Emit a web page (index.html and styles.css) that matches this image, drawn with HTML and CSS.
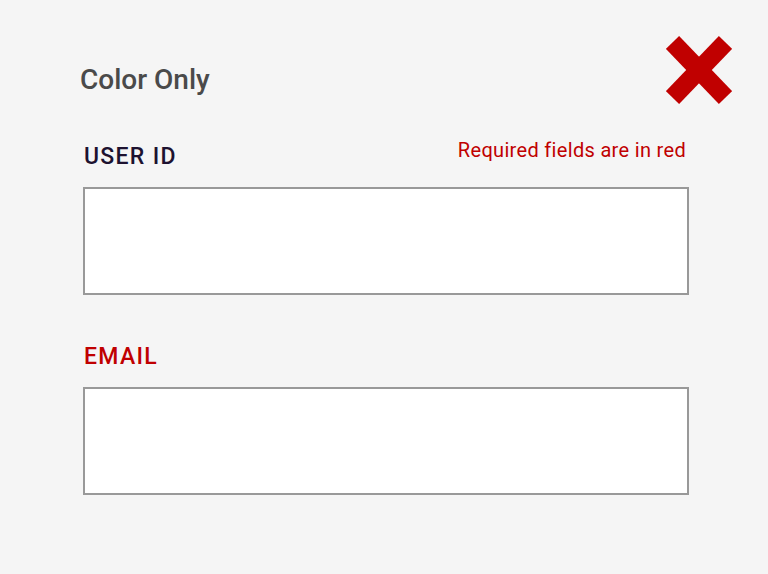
FILE: index.html
```html
<!DOCTYPE html>
<html lang="en">
<head>
<meta charset="utf-8">
<link rel="stylesheet" href="styles.css">
<title>Color Only</title>
</head>
<body>
<main class="page">
  <header class="header">
    <h1 class="title">Color Only</h1>
    <svg class="mark" width="66" height="68" viewBox="0 0 66 68" aria-hidden="true">
      <line x1="6.5" y1="6.5" x2="59.5" y2="61.5" stroke="#c00000" stroke-width="18.4"/>
      <line x1="59.5" y1="6.5" x2="6.5" y2="61.5" stroke="#c00000" stroke-width="18.4"/>
    </svg>
  </header>
  <form class="form">
    <div class="field">
      <div class="field-head">
        <label class="label" for="uid">USER ID</label>
        <span class="hint">Required fields are in red</span>
      </div>
      <input class="input" id="uid" type="text">
    </div>
    <div class="field">
      <div class="field-head">
        <label class="label label-req" for="email">EMAIL</label>
      </div>
      <input class="input" id="email" type="text">
    </div>
  </form>
</main>
</body>
</html>
```
FILE: styles.css
```css
html, body {
  margin: 0;
  padding: 0;
  background: #f5f5f5;
}
body {
  font-family: Roboto, "Liberation Sans", sans-serif;
  width: 768px;
  height: 574px;
  overflow: hidden;
}
.page {
  padding: 36px 36px 0 79px;
}
.header {
  display: flex;
  justify-content: space-between;
  align-items: flex-start;
}
.title {
  margin: 28px 0 0 1px;
  font-size: 28px;
  font-weight: 500;
  line-height: 32px;
  color: #4a4a4a;
}
.mark {
  display: block;
}
.form {
  margin-top: 34px;
  width: 606px;
  padding-left: 4px;
}
.field {
  display: flex;
  flex-direction: column;
}
.field + .field {
  margin-top: 49px;
}
.field-head {
  display: flex;
  justify-content: space-between;
  align-items: flex-end;
  margin-bottom: 17px;
}
.label {
  font-size: 23px;
  font-weight: 500;
  letter-spacing: 1.3px;
  line-height: 26px;
  color: #1d1230;
  padding-left: 1px;
}
.label-req {
  color: #c00000;
}
.hint {
  font-size: 20px;
  line-height: 24px;
  letter-spacing: 0.32px;
  color: #c00000;
  padding-right: 3px;
  padding-bottom: 8px;
}
.input {
  box-sizing: border-box;
  width: 606px;
  height: 108px;
  margin: 0;
  border: 2px solid #999999;
  background: #ffffff;
  outline: none;
}
```
